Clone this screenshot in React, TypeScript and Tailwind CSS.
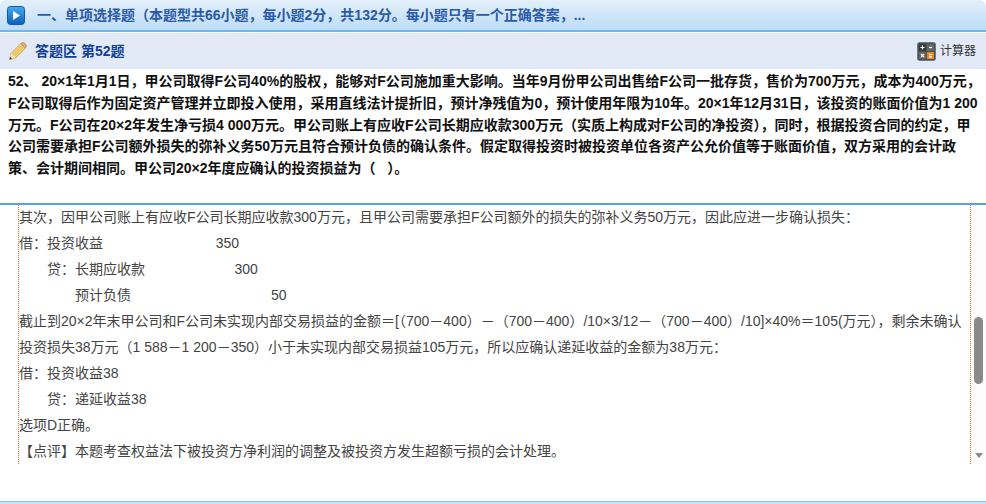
const cjk = "font-['Liberation_Sans','Noto_Sans_CJK_SC',sans-serif]";

function PlayIcon() {
  return (
    <svg width="18" height="19" viewBox="0 0 18 19">
      <defs>
        <linearGradient id="playBg" x1="0" y1="0" x2="0" y2="1">
          <stop offset="0" stopColor="#4aa8ee" />
          <stop offset="1" stopColor="#0b5fb8" />
        </linearGradient>
      </defs>
      <rect x="0.5" y="0.5" width="17" height="18" rx="3" fill="url(#playBg)" stroke="#0c5aa8" />
      <path d="M6 5 L13 9.5 L6 14 Z" fill="#fff" />
    </svg>
  );
}

function PencilIcon() {
  return (
    <svg width="18" height="18" viewBox="0 0 18 18">
      <path d="M0.5 17.5 L2 11.5 L12 1.5 L16.5 6 L6.5 16 Z" fill="#f4d67c" stroke="#b8963e" strokeWidth="0.8" />
      <path d="M4 12.5 L13.5 3 M5.5 14 L15 4.5" stroke="#e0b04c" strokeWidth="1" />
      <path d="M12 1.5 L13.3 0.6 Q14.4 0.2 15.4 1 L17 2.6 Q17.8 3.6 17.2 4.8 L16.5 6 Z" fill="#eaa873" stroke="#b8803e" strokeWidth="0.6" />
      <path d="M0.5 17.5 L2 11.5 L6.5 16 Z" fill="#f7e6c0" />
      <path d="M0.5 17.5 L1.2 14.8 L3.2 16.8 Z" fill="#444" />
    </svg>
  );
}

function CalcIcon() {
  return (
    <svg width="19" height="19" viewBox="0 0 19 19">
      <rect x="0.5" y="0.5" width="18" height="18" rx="2" fill="#4a4f52" stroke="#6b7a88" />
      <rect x="2" y="2" width="7" height="7" fill="#3a3a3a" />
      <rect x="10" y="2" width="7" height="7" fill="#666" />
      <rect x="2" y="10" width="7" height="7" fill="#666" />
      <rect x="10" y="10" width="7" height="7" fill="#e88a1e" />
      <path d="M5.5 3.5 V7.5 M3.5 5.5 H7.5" stroke="#fff" strokeWidth="1.2" />
      <path d="M12 5.5 H15" stroke="#fff" strokeWidth="1.2" />
      <path d="M4 12 L7 15 M7 12 L4 15" stroke="#fff" strokeWidth="1.2" />
      <path d="M12 12.5 H15 M12 14.8 H15" stroke="#fff" strokeWidth="1.2" />
    </svg>
  );
}

const answerLines = [
  "其次，因甲公司账上有应收F公司长期应收款300万元，且甲公司需要承担F公司额外的损失的弥补义务50万元，因此应进一步确认损失：",
  "借：投资收益\u00a0\u00a0\u00a0\u00a0\u00a0\u00a0\u00a0\u00a0\u00a0\u00a0\u00a0\u00a0\u00a0\u00a0\u00a0\u00a0\u00a0\u00a0\u00a0\u00a0\u00a0\u00a0\u00a0\u00a0\u00a0\u00a0\u00a0\u00a0\u00a0350",
  "\u3000\u3000贷：长期应收款\u00a0\u00a0\u00a0\u00a0\u00a0\u00a0\u00a0\u00a0\u00a0\u00a0\u00a0\u00a0\u00a0\u00a0\u00a0\u00a0\u00a0\u00a0\u00a0\u00a0\u00a0\u00a0\u00a0300",
  "\u3000\u3000\u3000\u3000预计负债\u00a0\u00a0\u00a0\u00a0\u00a0\u00a0\u00a0\u00a0\u00a0\u00a0\u00a0\u00a0\u00a0\u00a0\u00a0\u00a0\u00a0\u00a0\u00a0\u00a0\u00a0\u00a0\u00a0\u00a0\u00a0\u00a0\u00a0\u00a0\u00a0\u00a0\u00a0\u00a0\u00a0\u00a0\u00a0\u00a050",
  "截止到20×2年末甲公司和F公司未实现内部交易损益的金额＝[（700－400）－（700－400）/10×3/12－（700－400）/10]×40%＝105(万元），剩余未确认",
  "投资损失38万元（1 588－1 200－350）小于未实现内部交易损益105万元，所以应确认递延收益的金额为38万元：",
  "借：投资收益38",
  "\u3000\u3000贷：递延收益38",
  "选项D正确。",
  "【点评】本题考查权益法下被投资方净利润的调整及被投资方发生超额亏损的会计处理。",
];

export default function App() {
  return (
    <div className={`w-[986px] h-[504px] overflow-hidden bg-white flex flex-col ${cjk}`}>
      <div className="h-[30px] shrink-0 flex items-center pl-[7px] gap-[12px] bg-gradient-to-b from-[#e4f0fb] to-[#bcdcf7] rounded-t-[6px]">
        <PlayIcon />
        <span className="text-[14px] font-bold text-[#2a5aa8] whitespace-nowrap">
          一、单项选择题（本题型共66小题，每小题2分，共132分。每小题只有一个正确答案，...
        </span>
      </div>
      <div className="h-[3px] shrink-0 bg-[#6cb8f0] border-b border-white" />
      <div className="h-[36px] shrink-0 flex items-center pl-[9px] pr-[10px] bg-[#e2eaf7]">
        <PencilIcon />
        <span className="ml-[8px] text-[14px] font-bold text-[#123f96]">答题区 第52题</span>
        <div className="ml-auto flex items-center gap-[4px]">
          <CalcIcon />
          <span className="text-[12px] text-[#333]">计算器</span>
        </div>
      </div>
      <div className="h-[134px] shrink-0 pl-[8px] pr-[4px] pt-[2px] text-[14px] leading-[21.8px] font-bold text-[#111]">
        <div>52、 20×1年1月1日，甲公司取得F公司40%的股权，能够对F公司施加重大影响。当年9月份甲公司出售给F公司一批存货，售价为700万元，成本为400万元，</div>
        <div>F公司取得后作为固定资产管理并立即投入使用，采用直线法计提折旧，预计净残值为0，预计使用年限为10年。20×1年12月31日，该投资的账面价值为1 200</div>
        <div>万元。F公司在20×2年发生净亏损4 000万元。甲公司账上有应收F公司长期应收款300万元（实质上构成对F公司的净投资），同时，根据投资合同的约定，甲</div>
        <div>公司需要承担F公司额外损失的弥补义务50万元且符合预计负债的确认条件。假定取得投资时被投资单位各资产公允价值等于账面价值，双方采用的会计政</div>
        <div>策、会计期间相同。甲公司20×2年度应确认的投资损益为（&nbsp;&nbsp;&nbsp;）。</div>
      </div>
      <div className="h-[2px] shrink-0 bg-[#5a9fe0]" />
      <div className="h-[259px] shrink-0 flex pl-[18px]">
        <div className="w-[953px] h-full border-x border-dotted border-[#e8702a] overflow-hidden text-[14px] leading-[26px] text-[#444] whitespace-nowrap">
          <div className="-mt-px">
            {answerLines.map((line, i) => (
              <div key={i}>{line}</div>
            ))}
          </div>
        </div>
        <div className="w-[15px] h-full bg-[#fcfcfc] flex flex-col items-center">
          <div className="mt-[112px] w-[9px] h-[67px] rounded-[5px] bg-[#8a8a8a]" />
          <div className="mt-auto mb-[6px] w-0 h-0 border-x-[4.5px] border-x-transparent border-t-[5px] border-t-[#8a8a8a]" />
        </div>
      </div>
      <div className="mt-auto h-[3px] shrink-0 bg-[#c4e4f9] border-t border-[#86c2ee]" />
    </div>
  );
}
